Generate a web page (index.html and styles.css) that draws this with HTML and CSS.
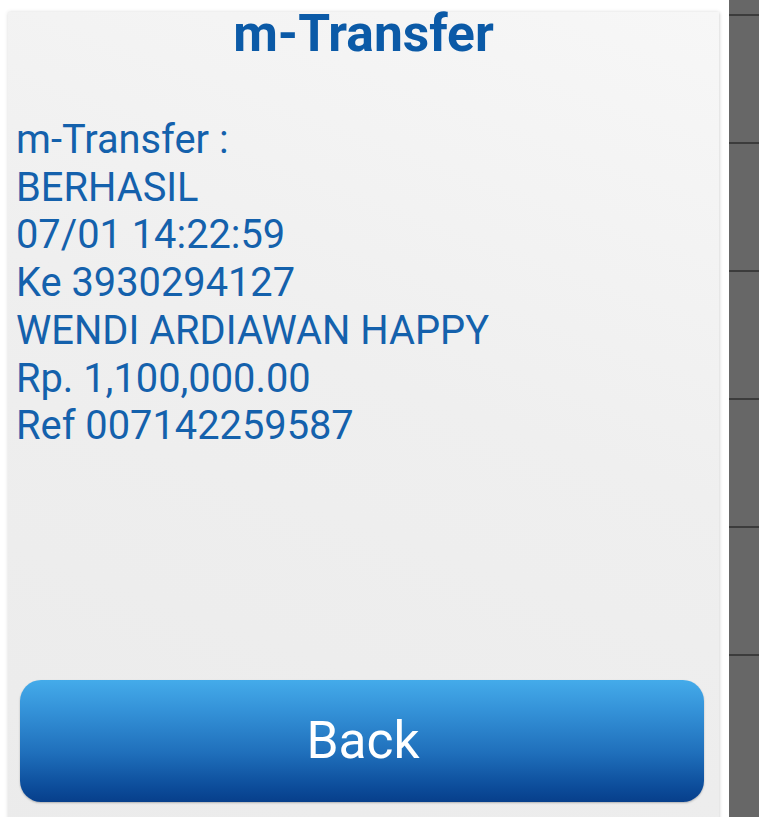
FILE: index.html
```html
<!DOCTYPE html>
<html>
<head>
<meta charset="utf-8">
<link rel="stylesheet" href="styles.css">
</head>
<body>
<div class="page">
  <main class="card">
    <h1 class="title">m-Transfer</h1>
    <div class="message">
      <div>m-Transfer :</div>
      <div>BERHASIL</div>
      <div>07/01 14:22:59</div>
      <div>Ke 3930294127</div>
      <div>WENDI ARDIAWAN HAPPY</div>
      <div>Rp. 1,100,000.00</div>
      <div>Ref 007142259587</div>
    </div>
    <button class="back">Back</button>
  </main>
  <aside class="strip">
    <div class="seg first"></div>
    <div class="seg"></div>
    <div class="seg"></div>
    <div class="seg"></div>
    <div class="seg"></div>
    <div class="seg"></div>
    <div class="seg"></div>
  </aside>
</div>
</body>
</html>
```
FILE: styles.css
```css
html, body {
  margin: 0;
  padding: 0;
  background: #ffffff;
  height: 100%;
  overflow: hidden;
}
.page {
  display: flex;
  height: 817px;
  font-family: Roboto, "Liberation Sans", sans-serif;
}
.card {
  margin: 12px 0 0 8px;
  width: 711px;
  height: 830px;
  background: linear-gradient(200deg, #f7f7f7 0%, #efefef 45%, #ebebeb 100%);
  box-shadow: 0 0 4px rgba(0,0,0,0.12), 1px 1px 3px rgba(0,0,0,0.08);
  display: flex;
  flex-direction: column;
}
.title {
  margin: 0;
  font-size: 51.5px;
  font-weight: 700;
  line-height: 44px;
  color: #0b5aa7;
  text-align: center;
}
.message {
  margin-top: 60px;
  padding-left: 8px;
  font-size: 39.8px;
  line-height: 47.7px;
  color: #1461ac;
}
.back {
  margin: 230px 15px 0 12px;
  height: 122px;
  border: none;
  border-radius: 21px;
  background: linear-gradient(180deg, #44abea 0%, #3492d8 25%, #1f6fbb 60%, #0c4c9a 88%, #073f8b 100%);
  box-shadow: 0 1px 2px rgba(0,0,0,0.25);
  color: #ffffff;
  font-family: Roboto, "Liberation Sans", sans-serif;
  font-size: 51.5px;
  font-weight: 400;
  padding: 0 0 0 2px;
}
.strip {
  margin-left: auto;
  width: 30px;
  background: #676767;
  display: flex;
  flex-direction: column;
}
.seg {
  height: 128px;
  flex: none;
  border-top: 2px solid #3c3c3c;
  box-sizing: border-box;
}
.seg.first {
  height: 14px;
  border-top: none;
}
```
